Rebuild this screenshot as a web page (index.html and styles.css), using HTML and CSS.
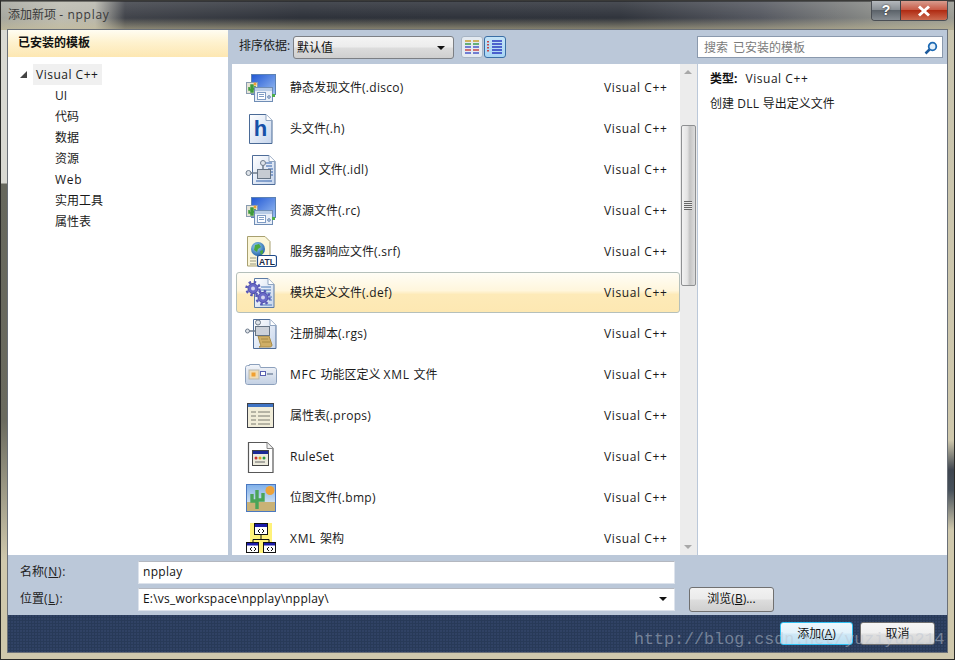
FILE: index.html
```html
<!DOCTYPE html>
<html lang="zh-CN">
<head>
<meta charset="utf-8">
<title>添加新项 - npplay</title>
<link rel="stylesheet" href="styles.css">
</head>
<body>
<svg class="defs" width="0" height="0" aria-hidden="true">
  <defs>
    <linearGradient id="gBlue" x1="0" y1="0" x2="1" y2="1"><stop offset="0" stop-color="#1f56d4"/><stop offset="1" stop-color="#9cc0f2"/></linearGradient>
    <linearGradient id="gPage" x1="0" y1="0" x2="1" y2="1"><stop offset="0" stop-color="#ffffff"/><stop offset="1" stop-color="#c6d5ec"/></linearGradient>
    <linearGradient id="gSky" x1="0" y1="0" x2="0" y2="1"><stop offset="0" stop-color="#7fb0ea"/><stop offset="1" stop-color="#f4f6f4"/></linearGradient>
    <linearGradient id="gFold" x1="0" y1="0" x2="0" y2="1"><stop offset="0" stop-color="#f4f6fa"/><stop offset="1" stop-color="#c3d0e3"/></linearGradient>
    <radialGradient id="gGlobe" cx=".4" cy=".35" r=".7"><stop offset="0" stop-color="#9fd4f0"/><stop offset="1" stop-color="#1d5ea8"/></radialGradient>
    <symbol id="i-res" viewBox="0 0 32 32">
      <rect x="6.500" y="2.500" width="24" height="20" fill="url(#gBlue)" stroke="#5c82b4"/>
      <rect x="1.500" y="10.500" width="11" height="11" fill="#e6e4d6" stroke="#8a9cb0"/>
      <path d="M6 20v-7h2v7zM4 15v3h2M10 14v3H8" fill="#3f9a3c" stroke="#3f9a3c" stroke-width="1.500"/>
      <circle cx="10" cy="12" r="1.500" fill="#f0a030"/>
      <rect x="9.500" y="15.500" width="18" height="14" fill="#e9eff8" stroke="#6f8db5"/>
      <rect x="10" y="16" width="17" height="3" fill="#b8cce6"/>
      <rect x="12.500" y="20.500" width="8" height="7" fill="#fff" stroke="#7f9cc4"/>
      <path d="M14 22.500h5M14 24.500h5" stroke="#7f9cc4"/>
      <circle cx="24" cy="25" r="1.300" fill="none" stroke="#5c7fae"/>
      <rect x="27" y="22" width="3" height="3" fill="#4fae4a"/>
    </symbol>
    <symbol id="i-h" viewBox="0 0 32 32">
      <path d="M4.500 1.500H21l6 6v23H4.500z" fill="url(#gPage)" stroke="#4a6a96"/>
      <path d="M21 1.500v6h6" fill="#fff" stroke="#8fa4c0"/>
      <text x="15.500" y="23" text-anchor="middle" class="ic-h">h</text>
    </symbol>
    <symbol id="i-midl" viewBox="0 0 32 32">
      <path d="M7.500 1.500H24l6 6v23H7.500z" fill="url(#gPage)" stroke="#4e6c98"/>
      <path d="M24 1.500v6h6" fill="#fff" stroke="#8fa4c0"/>
      <path d="M21 9h6M21 12h6M23 15h5M26 18h2M26 21h2M11 27h16" stroke="#2f5fa8"/>
      <path d="M5 19h8M18 9v7" stroke="#6f7c8c" stroke-width="1.500"/>
      <rect x="12.500" y="15.500" width="13" height="9" fill="#c6cbd2" stroke="#667484"/>
      <circle cx="3.500" cy="19" r="2.500" fill="#dfe4ea" stroke="#6f7c8c"/>
      <circle cx="18" cy="9" r="2.500" fill="#dfe4ea" stroke="#6f7c8c"/>
    </symbol>
    <symbol id="i-atl" viewBox="0 0 32 32">
      <path d="M2.500 .5H20l5 5v24.500H2.500z" fill="#fbf6d8" stroke="#a8a070"/>
      <path d="M5 22h6M5 25h6M5 28h6" stroke="#9a9a80"/>
      <circle cx="13" cy="13" r="7" fill="url(#gGlobe)"/>
      <path d="M10 9l4-1 2 3-3 2-1 3-3-2zM15 15l3-1 0 3-2 2z" fill="#4aa83c"/>
      <rect x="12.500" y="19.500" width="19" height="11" rx="2" fill="#fff" stroke="#1f4a8a" stroke-width="1.200"/>
      <text x="22" y="28.500" text-anchor="middle" class="ic-atl">ATL</text>
    </symbol>
    <symbol id="i-def" viewBox="0 0 32 32">
      <path d="M9.500 1.500H23l6 6v23H9.500z" fill="url(#gPage)" stroke="#5c7aa4"/>
      <path d="M23 1.500v6h6" fill="#fff" stroke="#8fa4c0"/>
      <path d="M16 10h10M16 13h10M16 16h10M24 20h3M24 23h3M15 28h12" stroke="#4a78b8"/>
      <circle cx="8" cy="11.500" r="5" fill="#6a6ac8" stroke="#4a4aa8"/>
      <circle cx="8" cy="11.500" r="6.500" fill="none" stroke="#5858b8" stroke-width="2.500" stroke-dasharray="2.400 2.700"/>
      <circle cx="8" cy="11.500" r="2" fill="#d4d4f0"/>
      <circle cx="18" cy="20.500" r="5" fill="#6a6ac8" stroke="#4a4aa8"/>
      <circle cx="18" cy="20.500" r="6.500" fill="none" stroke="#5858b8" stroke-width="2.500" stroke-dasharray="2.400 2.700"/>
      <circle cx="18" cy="20.500" r="2" fill="#d4d4f0"/>
    </symbol>
    <symbol id="i-rgs" viewBox="0 0 32 32">
      <path d="M8.500 1.500H25l6 6v23H8.500z" fill="url(#gPage)" stroke="#4e6c98"/>
      <path d="M25 1.500v6h6" fill="#fff" stroke="#8fa4c0"/>
      <path d="M13 18h11l3 9c0 2-2 2-3 2H14c2 0 2-2 1-4z" fill="#cfae66" stroke="#a88a44"/>
      <path d="M16 21h7M17 24h8" stroke="#a88a44"/>
      <path d="M4 13h8M13 8v4" stroke="#6f7c8c" stroke-width="1.500"/>
      <rect x="10.500" y="8.500" width="14" height="9" fill="#ccd1d9" stroke="#667484"/>
      <circle cx="2.500" cy="13" r="2" fill="#dfe4ea" stroke="#6f7c8c"/>
      <circle cx="13" cy="4.500" r="2.500" fill="#dfe4ea" stroke="#6f7c8c"/>
    </symbol>
    <symbol id="i-mfc" viewBox="0 0 32 32">
      <path d="M.5 8.500c0-1 1-2 2-2h2v-1h10l1 3H29c1.500 0 2.500 1 2.500 2v13c0 1-1 2-2 2h-27c-1 0-2-1-2-2z" fill="url(#gFold)" stroke="#8ca0bc"/>
      <rect x="4" y="11" width="10" height="9" fill="#f0dcb4" stroke="#b8b8b0"/>
      <rect x="6.500" y="13.500" width="4" height="4" fill="#f0a030"/>
      <rect x="15.500" y="12.500" width="5" height="4" fill="#fff" stroke="#5860b0"/>
      <path d="M22 15h6" stroke="#7c8ca4" stroke-width="1.500"/>
    </symbol>
    <symbol id="i-props" viewBox="0 0 32 32">
      <rect x="2.500" y="3.500" width="26" height="24" fill="#f1edd9" stroke="#3e4148"/>
      <rect x="3" y="4" width="25" height="3" fill="#3f74c4"/>
      <path d="M6 12h5M13 12h12M6 16h5M13 16h12M6 20h5M13 20h12M6 24h5M13 24h12" stroke="#7a7a70"/>
    </symbol>
    <symbol id="i-rule" viewBox="0 0 32 32">
      <path d="M3.500 1.500H22l6 6v24H3.500z" fill="#fff" stroke="#585858" stroke-width="1.200"/>
      <path d="M22 1.500v6h6" fill="#f0f0f0" stroke="#888"/>
      <rect x="7.500" y="9.500" width="16" height="15" fill="#eceadc" stroke="#444"/>
      <rect x="8" y="10" width="15" height="3" fill="#1c2a96"/>
      <circle cx="11" cy="17" r="1.500" fill="#c83030"/><circle cx="15" cy="17" r="1.500" fill="#e0a020"/><circle cx="19" cy="17" r="1.500" fill="#2e9a40"/>
      <path d="M10 21h10" stroke="#666"/>
    </symbol>
    <symbol id="i-bmp" viewBox="0 0 32 32">
      <rect x="1.500" y="2.500" width="29" height="27" fill="url(#gSky)" stroke="#4a78c0"/>
      <rect x="2" y="20" width="28" height="9" fill="#c9b276"/>
      <circle cx="25" cy="8.500" r="4.500" fill="#eea238"/>
      <path d="M12 27V8M7 12v7h5M18 11v7h-6" fill="none" stroke="#4aa458" stroke-width="3.400"/>
    </symbol>
    <symbol id="i-xml" viewBox="0 0 32 32">
      <rect x="5" y="0" width="22" height="30" fill="#fff27a"/>
      <rect x="9.500" y=".5" width="13" height="11" fill="#fff" stroke="#111"/>
      <rect x="10" y="1" width="12" height="3" fill="#1c1caa"/>
      <path d="M16 11.500v5M8 16.500h16M8 16.500v3M24 16.500v3" stroke="#111" fill="none"/>
      <rect x="1.500" y="19.500" width="12" height="10" fill="#fff" stroke="#111"/>
      <rect x="2" y="20" width="11" height="2.500" fill="#1c1caa"/>
      <rect x="18.500" y="19.500" width="12" height="10" fill="#fff" stroke="#111"/>
      <rect x="19" y="20" width="11" height="2.500" fill="#1c1caa"/>
      <path d="M15 6l-2 2 2 2M17 6l2 2-2 2M7 24l-2 2 2 2M9 24l2 2-2 2M24 24l-2 2 2 2M26 24l2 2-2 2" fill="none" stroke="#111"/>
    </symbol>
  </defs>
</svg>

<div class="window">
  <header class="titlebar">
    <span class="title">添加新项 <span class="lat w">- npplay</span></span>
    <div class="caption">
      <span class="cap cap-help">?</span>
      <span class="cap cap-close">
        <svg width="16" height="12" viewBox="0 0 16 12"><path d="M3 1.500l10 9M13 1.500l-10 9" stroke="#fff" stroke-width="3"/></svg>
      </span>
    </div>
  </header>

  <div class="dialog">
    <div class="main">
      <aside class="side">
        <div class="side-head">已安装的模板</div>
        <div class="tree">
          <div class="tree-root"><span class="twist"></span><span class="tree-sel">Visual C++</span></div>
          <div class="tree-item">UI</div>
          <div class="tree-item">代码</div>
          <div class="tree-item">数据</div>
          <div class="tree-item">资源</div>
          <div class="tree-item"><span class="lat w">Web</span></div>
          <div class="tree-item">实用工具</div>
          <div class="tree-item">属性表</div>
        </div>
      </aside>

      <section class="center">
        <div class="toolbar">
          <span class="sort-label">排序依据:</span>
          <div class="combo"><span>默认值</span><span class="caret"></span></div>
          <span class="view">
            <svg width="16" height="16" viewBox="0 0 16 16"><path d="M1 2h6M9 2h6" stroke="#c9a030" stroke-width="1.500"/><path d="M1 5h6M9 5h6" stroke="#3a9a50" stroke-width="1.500"/><path d="M1 8h6M9 8h6" stroke="#4a5ac8" stroke-width="1.500"/><path d="M1 11h6M9 11h6" stroke="#c84848" stroke-width="1.500"/><path d="M1 14h6M9 14h6" stroke="#4a5ac8" stroke-width="1.500"/></svg>
          </span>
          <span class="view view-on">
            <svg width="16" height="16" viewBox="0 0 16 16"><path d="M1 2v12" stroke="#c84848" stroke-width="2" stroke-dasharray="1.500 1.500"/><path d="M5 2h10M5 5h10M5 8h10M5 11h10M5 14h10" stroke="#2a3ac0" stroke-width="1.500"/></svg>
          </span>
          <div class="search">
            <span>搜索 已安装的模板</span>
            <svg width="14" height="14" viewBox="0 0 14 14"><circle cx="8.500" cy="5.500" r="3.800" fill="#e4f0fa" stroke="#1d6ab4" stroke-width="1.800"/><path d="M5.500 8.500L1.500 12.500" stroke="#1d5a9c" stroke-width="2.500"/></svg>
          </div>
        </div>

        <div class="panes">
          <div class="list">
            <div class="row"><svg class="ico"><use href="#i-res"/></svg><span class="name">静态发现文件<span class="lat">(.disco)</span></span><span class="type">Visual C++</span></div>
            <div class="row"><svg class="ico"><use href="#i-h"/></svg><span class="name">头文件<span class="lat">(.h)</span></span><span class="type">Visual C++</span></div>
            <div class="row"><svg class="ico"><use href="#i-midl"/></svg><span class="name"><span class="lat">Midl </span>文件<span class="lat">(.idl)</span></span><span class="type">Visual C++</span></div>
            <div class="row"><svg class="ico"><use href="#i-res"/></svg><span class="name">资源文件<span class="lat">(.rc)</span></span><span class="type">Visual C++</span></div>
            <div class="row"><svg class="ico"><use href="#i-atl"/></svg><span class="name">服务器响应文件<span class="lat">(.srf)</span></span><span class="type">Visual C++</span></div>
            <div class="row row-sel"><svg class="ico"><use href="#i-def"/></svg><span class="name">模块定义文件<span class="lat">(.def)</span></span><span class="type">Visual C++</span></div>
            <div class="row"><svg class="ico"><use href="#i-rgs"/></svg><span class="name">注册脚本<span class="lat">(.rgs)</span></span><span class="type">Visual C++</span></div>
            <div class="row"><svg class="ico"><use href="#i-mfc"/></svg><span class="name"><span class="lat w">MFC </span>功能区定义 <span class="lat w">XML </span>文件</span><span class="type">Visual C++</span></div>
            <div class="row"><svg class="ico"><use href="#i-props"/></svg><span class="name">属性表<span class="lat">(.props)</span></span><span class="type">Visual C++</span></div>
            <div class="row"><svg class="ico"><use href="#i-rule"/></svg><span class="name"><span class="lat">RuleSet</span></span><span class="type">Visual C++</span></div>
            <div class="row"><svg class="ico"><use href="#i-bmp"/></svg><span class="name">位图文件<span class="lat">(.bmp)</span></span><span class="type">Visual C++</span></div>
            <div class="row"><svg class="ico"><use href="#i-xml"/></svg><span class="name"><span class="lat w">XML </span>架构</span><span class="type">Visual C++</span></div>
          </div>
          <div class="scrollbar">
            <span class="arrow arrow-up"></span>
            <div class="thumb"><span class="grip"></span></div>
            <span class="arrow arrow-down"></span>
          </div>
          <div class="detail">
            <p class="kind"><b>类型:</b><span class="type-val">Visual C++</span></p>
            <p class="desc">创建 <span class="lat">DLL </span>导出定义文件</p>
          </div>
        </div>
      </section>
    </div>

    <div class="form">
      <div class="form-row">
        <label class="form-label">名称<span class="lat w">(<u>N</u>):</span></label>
        <div class="field"><span class="lat">npplay</span></div>
      </div>
      <div class="form-row">
        <label class="form-label">位置<span class="lat w">(<u>L</u>):</span></label>
        <div class="field field-drop"><span class="path">E:\vs_workspace\npplay\npplay\</span><span class="caret"></span></div>
        <div class="btn btn-browse">浏览(<u>B</u>)...</div>
      </div>
    </div>

    <footer class="footer">
      <div class="btn btn-add">添加(<u>A</u>)</div>
      <div class="btn btn-cancel">取消</div>
    </footer>
  </div>
  <div class="watermark">http://blog.csdn.net/yuziyun214</div>
</div>
</body>
</html>
```

FILE: styles.css
```css
* { box-sizing: border-box; }
html, body { margin: 0; padding: 0; }
body {
  width: 955px;
  height: 660px;
  overflow: hidden;
  font: 12px/16px "Open Sans", "Noto Sans CJK SC", sans-serif;
  color: #1a1a1a;
}
.defs { position: absolute; }
.lat { letter-spacing: .3px; }
.lat.w { letter-spacing: .7px; }

.window {
  position: relative;
  width: 955px;
  height: 660px;
  padding: 0 8px 8px;
  display: flex;
  flex-direction: column;
  background:
    linear-gradient(180deg, rgba(20,20,20,.9) 0, rgba(20,20,20,.9) 1px, rgba(255,255,255,.12) 2px, rgba(0,0,0,0) 18px, rgba(200,190,150,.55) 29px) 0 0 / 100% 30px no-repeat,
    linear-gradient(90deg, #a6a79f 0, #bdbcb2 60px, #b9b8ae 95px, #40434a 125px, #2e323a 300px, #30343c 620px, #555860 760px, #8a8c88 880px, #9b9c94 955px) 0 0 / 100% 30px no-repeat,
    linear-gradient(180deg, #d9d9d2 0, #d9d9d2 183px, #66675c 184px, #6a6a5e 420px, #cfc8ac 560px) 0 0 / 8px 100% no-repeat,
    linear-gradient(180deg, #c8c4ae 0, #cfc8ac 440px, #3f4650 470px, #46505a 490px, #cfc8ac 530px) 100% 0 / 8px 100% no-repeat,
    #cfc8ac;
}
.window::after {
  content: "";
  position: absolute;
  inset: 0;
  border: 1px solid #2a2a28;
  border-top-color: #3a3a38;
  pointer-events: none;
}

/* Title bar */
.titlebar {
  height: 30px;
  flex: none;
  display: flex;
  justify-content: space-between;
  align-items: flex-start;
  margin-right: -1px;
}
.title { margin-top: 7px; color: #3a3a3a; }
.caption { display: flex; height: 20px; margin-top: 1px; border: 1px solid #4a4e54; border-top: 0; border-radius: 0 0 4px 4px; overflow: hidden; }
.cap { display: flex; align-items: center; justify-content: center; height: 19px; }
.cap-help {
  width: 29px;
  font: bold 14px/19px "Liberation Sans", sans-serif;
  color: #fff;
  text-shadow: 0 0 2px #222;
  background: linear-gradient(180deg, #b4b8bc 0, #8a9096 45%, #5c636a 50%, #868c92 100%);
  border-right: 1px solid #3e4248;
}
.cap-close {
  width: 46px;
  background: linear-gradient(180deg, #d89c8e 0, #c85c48 45%, #b02c14 50%, #cc6a50 100%);
}

/* Dialog */
.dialog { flex: 1; display: flex; flex-direction: column; min-height: 0; outline: 1px solid #6a7078; }
.main { height: 525px; flex: none; display: flex; background: #bbc8d9; }

/* Side */
.side { width: 220px; flex: none; background: #fff; }
.side-head {
  height: 27px;
  padding-left: 10px;
  font-weight: 700;
  line-height: 26px;
  color: #111;
  background: linear-gradient(180deg, #fffdf2 0, #fef2cf 45%, #fde7b2 100%);
}
.tree { padding-top: 7px; }
.tree-root { display: flex; align-items: center; height: 21px; padding-left: 12px; }
.twist {
  width: 0;
  height: 0;
  margin-right: 6px;
  border-style: solid;
  border-width: 0 0 7px 7px;
  border-color: transparent transparent #444 transparent;
}
.tree-sel { width: 69px; height: 21px; padding-left: 3px; line-height: 21px; background: #f0f0f0; letter-spacing: .5px; }
.tree-item { height: 21px; padding-left: 47px; line-height: 21px; }

/* Center */
.center { flex: 1; min-width: 0; display: flex; flex-direction: column; padding-left: 4px; }
.toolbar { height: 34px; flex: none; display: flex; align-items: flex-start; padding-top: 6px; }
.sort-label { width: 54px; margin-left: 7px; line-height: 20px; flex: none; }
.combo {
  width: 161px;
  height: 23px;
  padding: 0 8px 0 3px;
  display: flex;
  align-items: center;
  justify-content: space-between;
  border: 1px solid #7c7f84;
  border-radius: 3px;
  background: linear-gradient(180deg, #f4f4f4 0, #ececec 48%, #dcdcdc 52%, #cfcfcf 100%);
  color: #111;
}
.caret { width: 0; height: 0; border-style: solid; border-width: 4px 4px 0; border-color: #111 transparent transparent; }
.view {
  width: 22px;
  height: 22px;
  margin-left: 7px;
  display: flex;
  align-items: center;
  justify-content: center;
  border: 1px solid #a7b4c4;
  border-radius: 3px;
  background: #e4eaf1;
}
.view-on {
  margin-left: 1px;
  border: 1px solid #3a6ea5;
  background: linear-gradient(180deg, #c4e4f8, #a8d4f4);
}
.search {
  width: 246px;
  height: 22px;
  margin-left: auto;
  margin-right: 4px;
  padding: 1px 4px 0 6px;
  display: flex;
  align-items: center;
  justify-content: space-between;
  border: 1px solid #8a99ad;
  background: #fff;
  color: #7a7a7a;
  word-spacing: 2px;
}

.panes { flex: 1; min-height: 0; display: flex; }

/* List */
.list { width: 448px; flex: none; overflow: hidden; background: #fff; padding-top: 3px; }
.row {
  height: 41px;
  margin-left: 4px;
  padding-left: 9px;
  display: flex;
  align-items: center;
}
.row-sel {
  padding-left: 8px;
  border: 1px solid #b5c0bb;
  border-radius: 3px;
  background: linear-gradient(180deg, #fffdf6 0, #fff6dc 45%, #fdeab8 55%, #fde8b2 100%);
}
.ico { width: 32px; height: 32px; flex: none; margin-right: 13px; }
.name { flex: 1; min-width: 0; white-space: nowrap; }
.type { width: 76px; flex: none; letter-spacing: .6px; white-space: nowrap; }
.row-sel .type { width: 75px; }
.ic-h { font: 700 22px "Liberation Sans", sans-serif; fill: #1650a8; }
.ic-atl { font: 700 8.5px "Liberation Sans", sans-serif; fill: #1a2a44; }

/* Scrollbar */
.scrollbar {
  width: 18px;
  flex: none;
  display: flex;
  flex-direction: column;
  align-items: center;
  padding-right: 1px;
  background: #ececec;
  border-right: 1px solid #bbc8d9;
}
.arrow { width: 0; height: 0; border-style: solid; flex: none; }
.arrow-up { margin-top: 6px; border-width: 0 4px 4px; border-color: transparent transparent #a8a8a8; }
.thumb {
  width: 15px;
  height: 161px;
  margin-top: 51px;
  display: flex;
  align-items: center;
  justify-content: center;
  border: 1px solid #8e9092;
  border-radius: 2px;
  background: linear-gradient(90deg, #f2f2f2 0, #e4e4e4 40%, #c4c4c4 60%, #dcdcdc 100%);
}
.grip { width: 8px; height: 9px; background: repeating-linear-gradient(180deg, #666 0, #666 1px, #e8e8e8 1px, #e8e8e8 2px); }
.arrow-down { margin-top: auto; margin-bottom: 6px; border-width: 4px 4px 0; border-color: #a8a8a8 transparent transparent; }

/* Detail */
.detail { flex: 1; min-width: 0; background: #fff; padding: 7px 12px; }
.detail p { margin: 0; }
.kind { display: flex; gap: 8px; height: 25px; }
.kind b { color: #111; }
.type-val { letter-spacing: .55px; }
.desc { line-height: 16px; }

/* Form */
.form { height: 60px; flex: none; background: #bbc8d9; padding-top: 5px; }
.form-row { display: flex; align-items: center; height: 24px; margin-bottom: 3px; }
.form-label { width: 130px; padding-left: 12px; flex: none; color: #222; }
.field {
  width: 537px;
  height: 23px;
  flex: none;
  padding: 0 4px;
  display: flex;
  align-items: center;
  justify-content: space-between;
  background: #fff;
  border: 1px solid #dde3ec;
  border-top-color: #b4b8c0;
  color: #111;
}
.field-drop { padding-right: 7px; }
.path { letter-spacing: .2px; }
.btn {
  display: flex;
  align-items: center;
  justify-content: center;
  color: #111;
  border-radius: 3px;
}
.btn-browse {
  width: 85px;
  height: 25px;
  margin-left: 14px;
  border: 1px solid #707070;
  background: linear-gradient(180deg, #f2f2f2 0, #ebebeb 48%, #dddddd 52%, #cfcfcf 100%);
}

/* Footer */
.footer {
  height: 37px;
  flex: none;
  display: flex;
  justify-content: flex-end;
  gap: 7px;
  padding: 7px 12px 0 0;
  background: radial-gradient(circle at 1px 1px, #33466a 0, #33466a .6px, transparent 1px) 0 0 / 3px 3px, #283a58;
}
.btn-add {
  width: 73px;
  height: 23px;
  border: 1px solid #2fc0f2;
  background: linear-gradient(180deg, #eef7fc 0, #e2f2fb 48%, #cfe8f6 52%, #bcdff2 100%);
}
.btn-cancel {
  width: 75px;
  height: 23px;
  border: 1px solid #707070;
  background: linear-gradient(180deg, #f6f6f6 0, #efefef 48%, #e0e0e0 52%, #d4d4d4 100%);
}

.watermark {
  position: absolute;
  left: 634px;
  top: 630px;
  font: 16.7px/20px "Liberation Mono", monospace;
  color: rgba(190, 198, 210, .5);
  white-space: nowrap;
  pointer-events: none;
}
```
